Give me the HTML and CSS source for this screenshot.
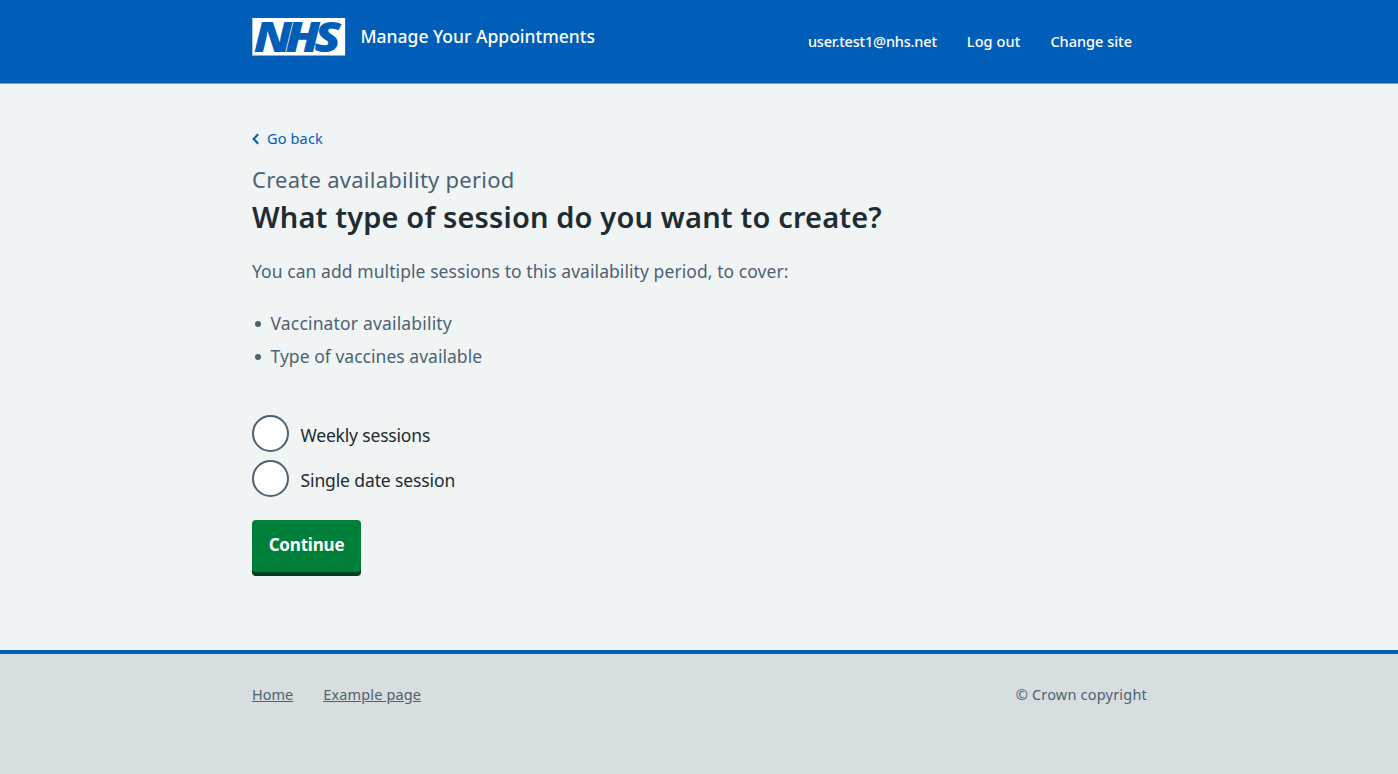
FILE: index.html
```html
<!DOCTYPE html>
<html lang="en">
<head>
<meta charset="utf-8">
<title>Manage Your Appointments</title>
<link rel="stylesheet" href="styles.css">
</head>
<body>
<header class="header">
  <div class="container header-row">
    <a class="brand">
      <svg class="logo" viewBox="0 0 94 38" role="img" aria-label="NHS">
        <rect width="94" height="38" fill="#fff"/>
        <text class="logo-text" transform="scale(1.15 1)" x="1.3 28.9 54.6" y="34">NHS</text>
      </svg>
      <span class="service">Manage Your Appointments</span>
    </a>
    <nav class="account">
      <a class="user">user.test1@nhs.net</a>
      <a class="logout">Log out</a>
      <a class="site">Change site</a>
    </nav>
  </div>
</header>
<main class="container main">
  <a class="back"><svg class="chevron" viewBox="0 0 8 12"><path d="M6.2 1.2 1.6 6l4.6 4.8" fill="none" stroke="#005eb8" stroke-width="2.1"/></svg><span class="back-text">Go back</span></a>
  <div class="caption">Create availability period</div>
  <h1 class="heading">What type of session do you want to create?</h1>
  <p class="intro">You can add multiple sessions to this availability period, to cover:</p>
  <ul class="list">
    <li class="item"><span class="item-one">Vaccinator availability</span></li>
    <li class="item"><span class="item-two">Type of vaccines available</span></li>
  </ul>
  <div class="radios">
    <label class="option"><input class="radio" type="radio" name="type"><span class="option-text weekly">Weekly sessions</span></label>
    <label class="option"><input class="radio" type="radio" name="type"><span class="option-text single">Single date session</span></label>
  </div>
  <button class="button" type="button">Continue</button>
</main>
<footer class="footer">
  <div class="container footer-row">
    <nav class="footer-links"><a class="footer-link home">Home</a><a class="footer-link example">Example page</a></nav>
    <span class="copyright">© Crown copyright</span>
  </div>
</footer>
</body>
</html>
```
FILE: styles.css
```css
* { box-sizing: border-box; }
body {
  margin: 0;
  min-height: 774px;
  display: flex;
  flex-direction: column;
  background: #f0f4f5;
  color: #212b32;
  font-family: "Noto Sans", "Open Sans", sans-serif;
  font-size: 17.5px;
}
.container { width: 895px; margin: 0 0 0 252px; }
.header { height: 84px; background: #005eb8; border-bottom: 1px solid #70a5d6; color: #fff; }
.header-row { display: flex; justify-content: space-between; padding-top: 17.5px; }
.brand { display: flex; gap: 15px; }
.logo { width: 93.5px; height: 37.5px; display: block; overflow: visible; }
.logo-text { font: italic 800 43px "Open Sans", sans-serif; fill: #005eb8; }
.service { line-height: 37px; font-size: 17.5px; font-weight: 500; }
.account { display: flex; gap: 30px; padding: 13px 15px 0 0; line-height: 20px; font-size: 14.5px; font-weight: 500; }
.user { letter-spacing: -0.18px; }
.logout { letter-spacing: 0.1px; }
.main { padding-top: 43.5px; height: 566px; display: flex; flex-direction: column; align-items: flex-start; }
.back { display: flex; align-items: center; gap: 7px; height: 22px; color: #005eb8; font-size: 14.5px; line-height: 20px; letter-spacing: 0.15px; }
.back-text { padding-bottom: 2px; }
.chevron { width: 8px; height: 12px; }
.caption { margin-top: 13px; color: #4c6272; font-size: 22px; line-height: 32px; letter-spacing: 0.26px; }
.heading { margin: 3px 0 0; font-size: 29px; font-weight: 600; line-height: 38px; letter-spacing: 0.16px; }
.intro { margin: 21px 0 0; color: #4c6272; line-height: 28px; letter-spacing: 0.07px; }
.list { margin: 24px 0 0; padding: 0; list-style: none; color: #4c6272; }
.item { display: flex; align-items: center; gap: 9.5px; height: 28px; line-height: 28px; margin-bottom: 5.5px; padding-left: 3px; }
.item::before { content: ""; width: 6px; height: 6px; border-radius: 50%; background: #4c6272; margin-top: 2px; }
.item-one { letter-spacing: 0.17px; }
.item-two { letter-spacing: 0.03px; }
.radios { display: grid; gap: 8px; margin-top: 39.5px; }
.option { display: flex; align-items: center; gap: 11.5px; height: 37px; }
.option-text { padding-top: 2px; }
.weekly { letter-spacing: -0.18px; }
.single { letter-spacing: -0.12px; }
.radio { appearance: none; width: 37px; height: 37px; margin: 0; border: 2px solid #4c6272; border-radius: 50%; background: #fff; }
.button {
  margin-top: 23px;
  width: 109px;
  height: 52px;
  padding: 0 0 2px;
  border: 0;
  border-radius: 4px;
  background: #007f3b;
  box-shadow: 0 4px 0 #00401e;
  color: #fff;
  font: 700 17px/50px "Noto Sans", sans-serif;
  letter-spacing: -0.2px;
}
.footer { flex: 1; border-top: 4px solid #005eb8; background: #d8dde0; color: #4c6272; font-size: 14.5px; line-height: 22px; }
.footer-row { display: flex; justify-content: space-between; padding-top: 29px; }
.footer-links { display: flex; gap: 30px; }
.footer-link { text-decoration: underline; }
.example { letter-spacing: 0.14px; }
.copyright { letter-spacing: 0.2px; }
```
